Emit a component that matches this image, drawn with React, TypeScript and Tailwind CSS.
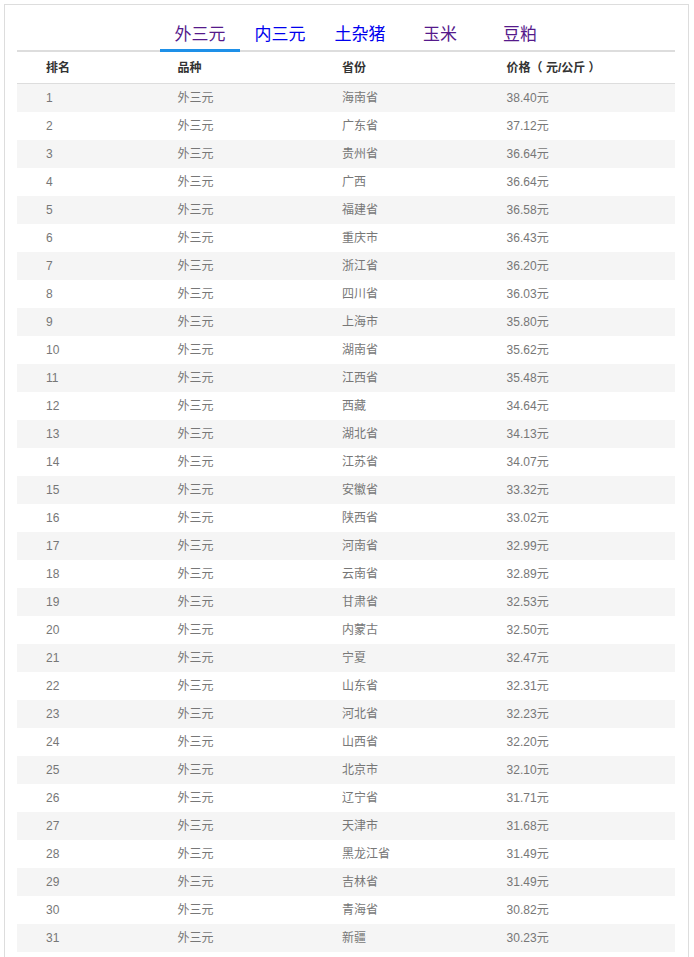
import React from 'react';

const tabs = [
  { name: '外三元', color: 'text-[#551a8b]', active: true },
  { name: '内三元', color: 'text-[#0000ee]', active: false },
  { name: '土杂猪', color: 'text-[#0000ee]', active: false },
  { name: '玉米', color: 'text-[#551a8b]', active: false },
  { name: '豆粕', color: 'text-[#551a8b]', active: false },
];

const rows: [string, string][] = [
  ['海南省', '38.40'], ['广东省', '37.12'], ['贵州省', '36.64'], ['广西', '36.64'],
  ['福建省', '36.58'], ['重庆市', '36.43'], ['浙江省', '36.20'], ['四川省', '36.03'],
  ['上海市', '35.80'], ['湖南省', '35.62'], ['江西省', '35.48'], ['西藏', '34.64'],
  ['湖北省', '34.13'], ['江苏省', '34.07'], ['安徽省', '33.32'], ['陕西省', '33.02'],
  ['河南省', '32.99'], ['云南省', '32.89'], ['甘肃省', '32.53'], ['内蒙古', '32.50'],
  ['宁夏', '32.47'], ['山东省', '32.31'], ['河北省', '32.23'], ['山西省', '32.20'],
  ['北京市', '32.10'], ['辽宁省', '31.71'], ['天津市', '31.68'], ['黑龙江省', '31.49'],
  ['吉林省', '31.49'], ['青海省', '30.82'], ['新疆', '30.23'],
];

export default function App() {
  return (
    <main className="bg-white min-h-screen pt-[4px] pl-[4px] font-['Liberation_Sans','Noto_Sans_CJK_SC',sans-serif]">
      <section className="w-[685px] border border-[#dddddd] border-b-0 pl-[12px] pr-[13px]">
        {/* tabs */}
        <nav className="flex flex-row h-[47px] pl-[143px] border-b-2 border-[#dddddd]">
          {tabs.map((tab) => (
            <div
              key={tab.name}
              className={`w-[80px] flex items-end justify-center pb-[2px] text-[17px] leading-[24px] -mb-[2px] border-b-[3px] ${tab.color} ${tab.active ? 'border-[#1e90e8]' : 'border-transparent'}`}
            >
              {tab.name}
            </div>
          ))}
        </nav>

        {/* table */}
        <div className="flex flex-row h-[32px] items-center border-b border-[#dddddd] text-[12px] font-bold text-[#333333]">
          <div className="w-[20%] pl-[29px]">排名</div>
          <div className="w-[25%] pl-[29px]">品种</div>
          <div className="w-[25%] pl-[29px]">省份</div>
          <div className="w-[30%] pl-[29px]">价格（ 元/公斤 ）</div>
        </div>
        <ul>
          {rows.map(([province, price], index) => (
            <li
              key={index}
              className={`flex flex-row h-[28px] items-center text-[12px] text-[#777777] ${index % 2 === 0 ? 'bg-[#f5f5f5]' : 'bg-white'}`}
            >
              <div className="w-[20%] pl-[29px]">{index + 1}</div>
              <div className="w-[25%] pl-[29px]">外三元</div>
              <div className="w-[25%] pl-[29px]">{province}</div>
              <div className="w-[30%] pl-[29px]">{price}元</div>
            </li>
          ))}
        </ul>
        <div className="h-[10px]"></div>
      </section>
    </main>
  );
}
